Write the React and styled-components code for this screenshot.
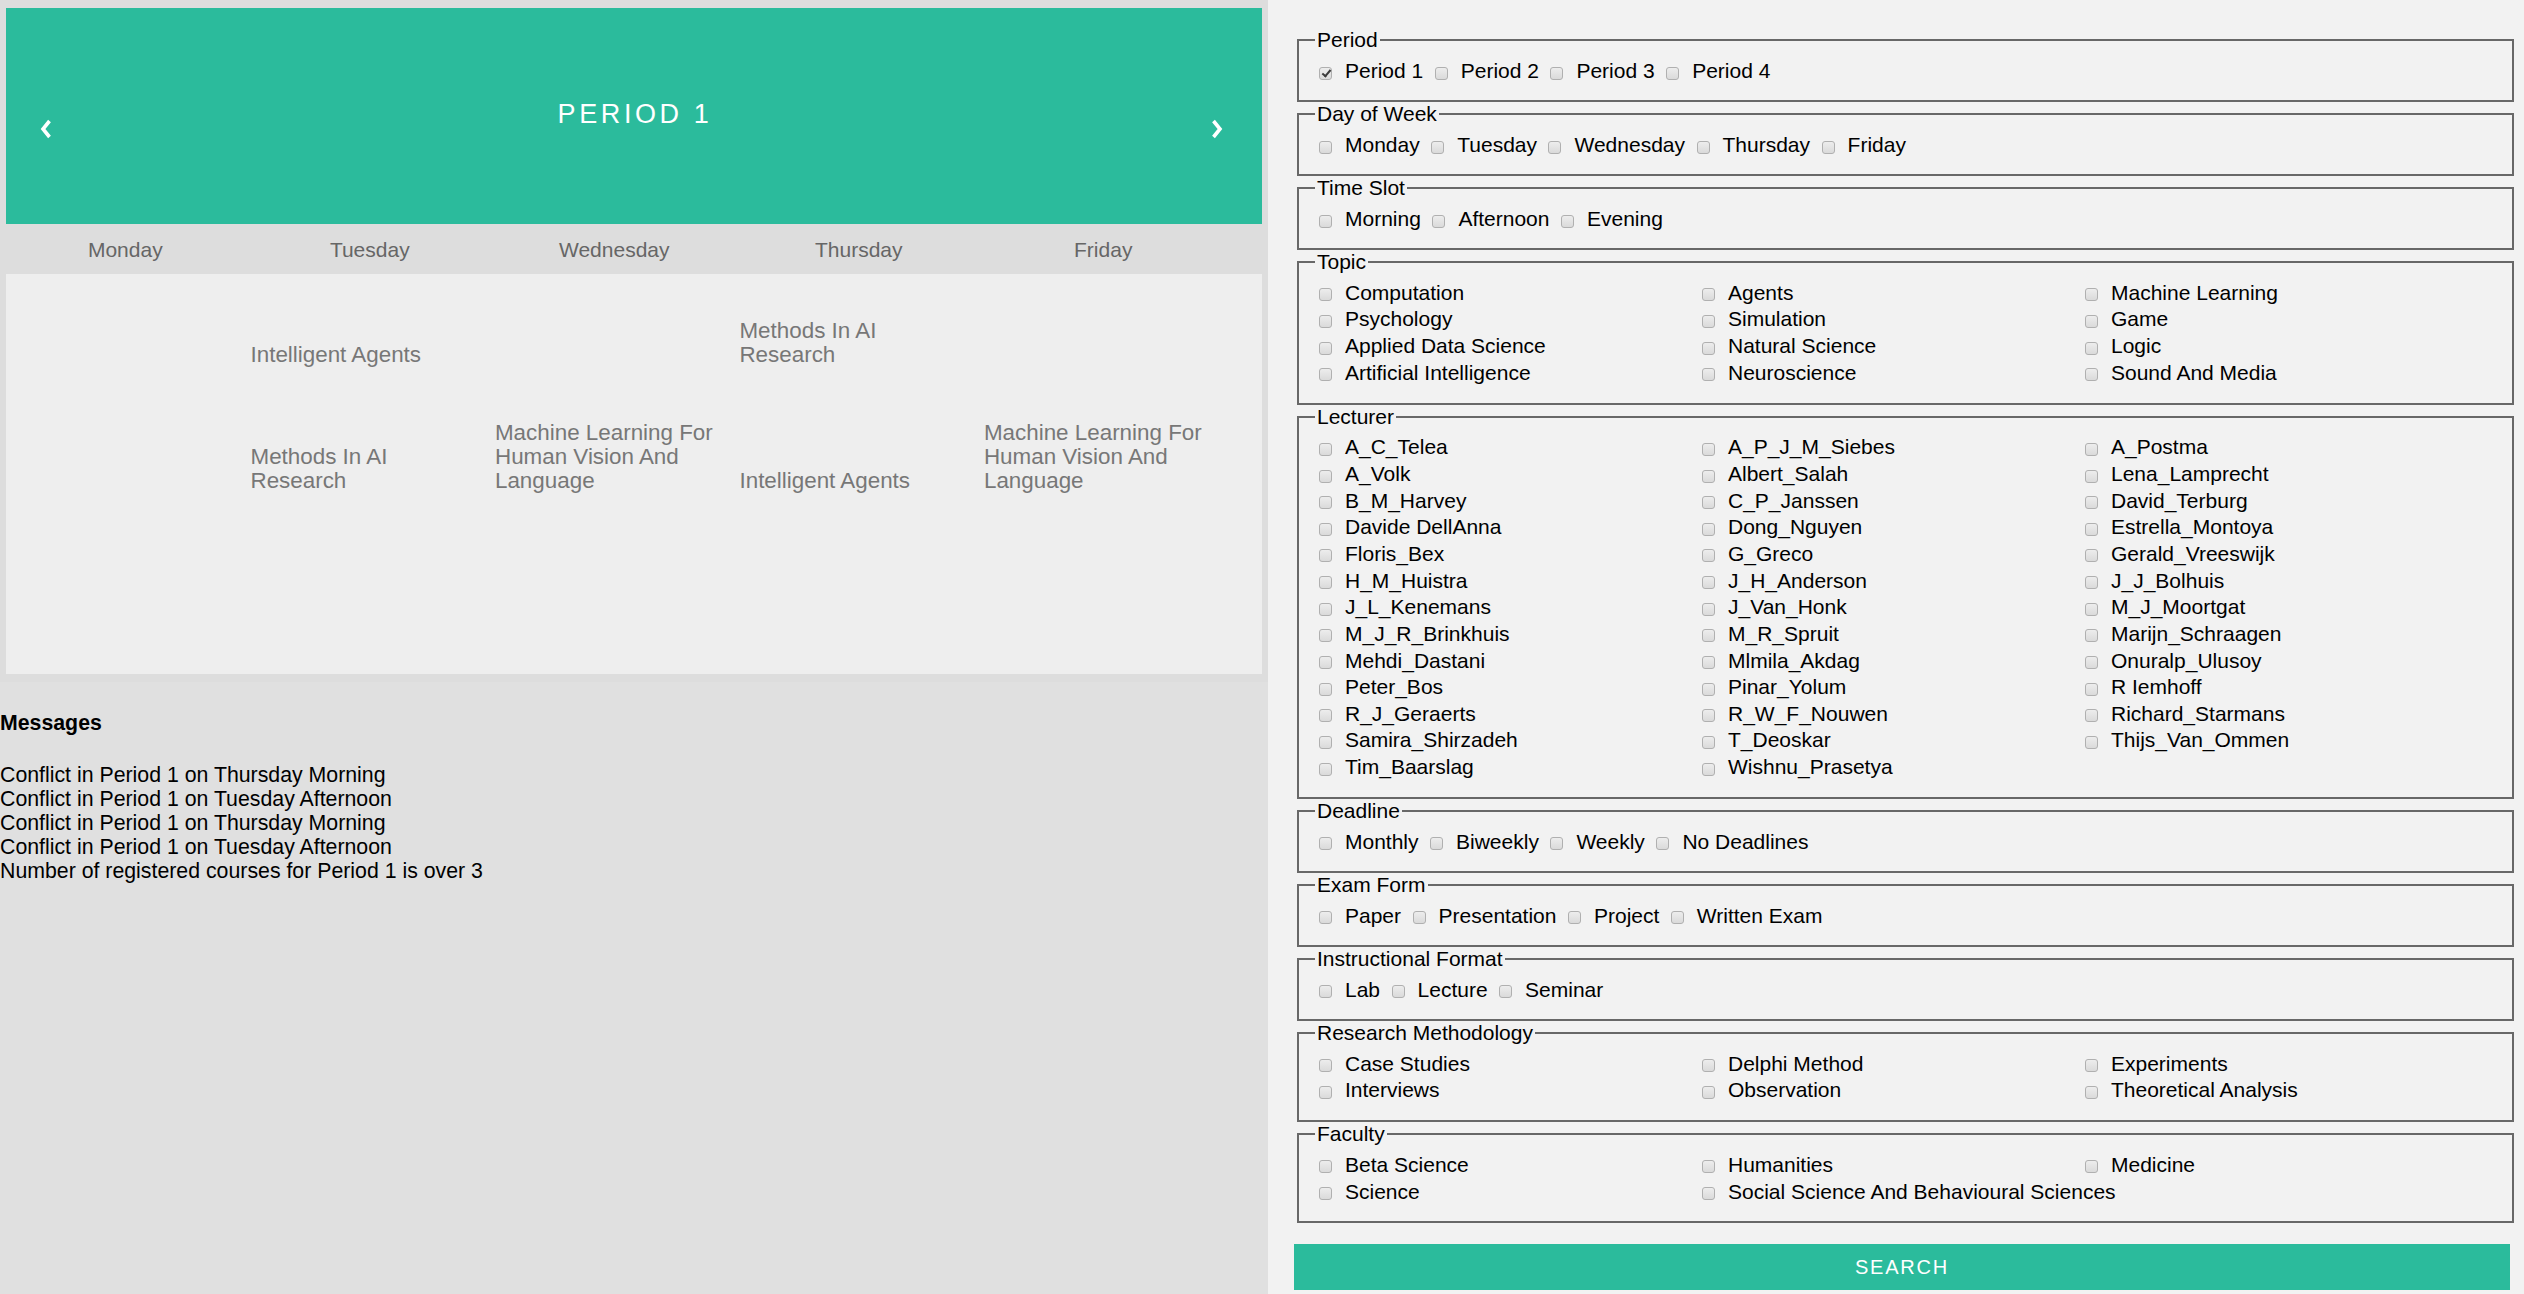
import React from 'react'
import styled, { createGlobalStyle } from 'styled-components'

const GlobalStyle = createGlobalStyle`
  html, body {
    margin: 0;
    padding: 0;
    background: #e0e0e0;
    font-family: "Liberation Sans", Arial, Helvetica, sans-serif;
  }
`

const Page = styled.div`
  display: grid;
  grid-template-columns: 1268px 1fr;
  height: 1294px;
  overflow: hidden;
`

const LeftCol = styled.div`
  background: #e0e0e0;
`

const CalendarWrap = styled.div`
  background: #ddd;
  padding: 8px 6px;
`

const MonthBar = styled.div`
  height: 216px;
  background: #2bbb9c;
  display: grid;
  grid-template-columns: 66px 1fr 66px;
  align-items: center;
  color: #fff;
`

const Arrow = styled.div`
  display: flex;
  justify-content: ${p => (p.$right ? 'flex-start' : 'flex-end')};
  padding-top: 25px;
  padding-left: ${p => (p.$right ? '15px' : '0')};
  padding-right: ${p => (p.$right ? '0' : '20px')};
`

const MonthTitle = styled.div`
  text-align: center;
  font-size: 27px;
  letter-spacing: 3.6px;
  text-transform: uppercase;
  padding-bottom: 3px;
  padding-left: 2px;
`

const Weekdays = styled.div`
  display: grid;
  grid-template-columns: repeat(5, 238.6px);
  column-gap: 5.9px;
  height: 50px;
  align-items: center;
  background: #ddd;
  color: #666;
  font-size: 21px;
  text-align: center;
  padding-top: 1px;
  box-sizing: border-box;
`

const DaysBody = styled.div`
  height: 400px;
  box-sizing: border-box;
  background: #eee;
  padding-top: 45px;
  display: grid;
  grid-template-columns: repeat(5, 238.6px);
  grid-auto-rows: max-content;
  column-gap: 5.9px;
  row-gap: 54px;
  align-items: end;
`

const Course = styled.div`
  color: #777;
  font-size: 22.4px;
  line-height: 24px;
  padding-right: 10px;
`

const MessagesTitle = styled.div`
  margin: 29px 0 28px;
  font-size: 21.3px;
  line-height: 24px;
  font-weight: bold;
  color: #000;
`

const Message = styled.div`
  font-size: 21.3px;
  line-height: 24px;
  color: #000;
`

const RightCol = styled.form`
  background: #f2f2f2;
  padding: 28px 10px 0 29px;
  margin: 0;
`

const Fieldset = styled.fieldset`
  margin: 0;
  padding: 5px 16px 15px;
  border: 2px solid #686868;
  min-width: 0;
`

const Legend = styled.legend`
  padding: 0 2px;
  font-size: 21px;
  line-height: 24px;
  color: #000;
`

const InlineRow = styled.div`
  display: flex;
  align-items: center;
  height: 28px;
  gap: 7.5px;
`

const GridRows = styled.div`
  display: grid;
  grid-template-columns: repeat(3, 383px);
  grid-auto-rows: 26.65px;
  align-items: center;
  padding: 0.5px 0 1.5px;
`

const Option = styled.label`
  display: flex;
  align-items: center;
  gap: 13px;
  font-size: 21px;
  line-height: 24px;
  color: #000;
  white-space: nowrap;
`

const Box = styled.input.attrs({ type: 'checkbox' })`
  appearance: none;
  -webkit-appearance: none;
  box-sizing: border-box;
  position: relative;
  margin: 0 0 0 4px;
  width: 13px;
  height: 13px;
  border: 1px solid #b0b0b0;
  border-radius: 3px;
  background: linear-gradient(#ededed, #dadada);
  transform: translateY(2px);
  flex: none;
  &:checked::after {
    content: '';
    position: absolute;
    left: 3.5px;
    top: 0.5px;
    width: 3px;
    height: 7px;
    border: solid #3a3a3a;
    border-width: 0 2px 2px 0;
    transform: rotate(40deg);
  }
`

const SearchButton = styled.button`
  display: block;
  margin: 21px 0 0 -3px;
  width: 1216px;
  height: 46px;
  border: none;
  background: #2bbb9c;
  color: #fff;
  font-family: "Liberation Sans", Arial, sans-serif;
  font-size: 20px;
  letter-spacing: 1.8px;
  text-transform: uppercase;
`

function Chevron({ right }) {
  return (
    <svg width="12" height="20" viewBox="0 0 12 20">
      <polyline
        points={right ? '2.5,2 9,10 2.5,18' : '9.5,2 3,10 9.5,18'}
        fill="none"
        stroke="#fff"
        strokeWidth="3.6"
      />
    </svg>
  )
}

const days = ['Monday', 'Tuesday', 'Wednesday', 'Thursday', 'Friday']

const slots = [
  ['', 'Intelligent Agents', '', 'Methods In AI Research', ''],
  [
    '',
    'Methods In AI Research',
    'Machine Learning For Human Vision And Language',
    'Intelligent Agents',
    'Machine Learning For Human Vision And Language',
  ],
]

const messages = [
  'Conflict in Period 1 on Thursday Morning',
  'Conflict in Period 1 on Tuesday Afternoon',
  'Conflict in Period 1 on Thursday Morning',
  'Conflict in Period 1 on Tuesday Afternoon',
  'Number of registered courses for Period 1 is over 3',
]

const filters = [
  { title: 'Period', items: ['Period 1', 'Period 2', 'Period 3', 'Period 4'], checked: ['Period 1'] },
  { title: 'Day of Week', items: ['Monday', 'Tuesday', 'Wednesday', 'Thursday', 'Friday'] },
  { title: 'Time Slot', items: ['Morning', 'Afternoon', 'Evening'] },
  {
    title: 'Topic',
    grid: true,
    items: [
      'Computation', 'Agents', 'Machine Learning',
      'Psychology', 'Simulation', 'Game',
      'Applied Data Science', 'Natural Science', 'Logic',
      'Artificial Intelligence', 'Neuroscience', 'Sound And Media',
    ],
  },
  {
    title: 'Lecturer',
    grid: true,
    items: [
      'A_C_Telea', 'A_P_J_M_Siebes', 'A_Postma',
      'A_Volk', 'Albert_Salah', 'Lena_Lamprecht',
      'B_M_Harvey', 'C_P_Janssen', 'David_Terburg',
      'Davide DellAnna', 'Dong_Nguyen', 'Estrella_Montoya',
      'Floris_Bex', 'G_Greco', 'Gerald_Vreeswijk',
      'H_M_Huistra', 'J_H_Anderson', 'J_J_Bolhuis',
      'J_L_Kenemans', 'J_Van_Honk', 'M_J_Moortgat',
      'M_J_R_Brinkhuis', 'M_R_Spruit', 'Marijn_Schraagen',
      'Mehdi_Dastani', 'Mlmila_Akdag', 'Onuralp_Ulusoy',
      'Peter_Bos', 'Pinar_Yolum', 'R Iemhoff',
      'R_J_Geraerts', 'R_W_F_Nouwen', 'Richard_Starmans',
      'Samira_Shirzadeh', 'T_Deoskar', 'Thijs_Van_Ommen',
      'Tim_Baarslag', 'Wishnu_Prasetya',
    ],
  },
  { title: 'Deadline', items: ['Monthly', 'Biweekly', 'Weekly', 'No Deadlines'] },
  { title: 'Exam Form', items: ['Paper', 'Presentation', 'Project', 'Written Exam'] },
  { title: 'Instructional Format', items: ['Lab', 'Lecture', 'Seminar'] },
  {
    title: 'Research Methodology',
    grid: true,
    items: ['Case Studies', 'Delphi Method', 'Experiments', 'Interviews', 'Observation', 'Theoretical Analysis'],
  },
  {
    title: 'Faculty',
    grid: true,
    items: ['Beta Science', 'Humanities', 'Medicine', 'Science', 'Social Science And Behavioural Sciences'],
  },
]

function FilterGroup({ title, items, grid, checked = [] }) {
  const Rows = grid ? GridRows : InlineRow
  return (
    <Fieldset>
      <Legend>{title}</Legend>
      <Rows>
        {items.map(item => (
          <Option key={item}>
            <Box defaultChecked={checked.includes(item)} />
            {item}
          </Option>
        ))}
      </Rows>
    </Fieldset>
  )
}

export default function App() {
  return (
    <Page>
      <GlobalStyle />
      <LeftCol>
        <CalendarWrap>
          <MonthBar>
            <Arrow>
              <Chevron />
            </Arrow>
            <MonthTitle>Period 1</MonthTitle>
            <Arrow $right>
              <Chevron right />
            </Arrow>
          </MonthBar>
          <Weekdays>
            {days.map(d => (
              <div key={d}>{d}</div>
            ))}
          </Weekdays>
          <DaysBody>
            {slots.map((row, r) =>
              row.map((c, i) => <Course key={`${r}-${i}`}>{c}</Course>)
            )}
          </DaysBody>
        </CalendarWrap>
        <MessagesTitle>Messages</MessagesTitle>
        {messages.map((m, i) => (
          <Message key={i}>{m}</Message>
        ))}
      </LeftCol>
      <RightCol onSubmit={e => e.preventDefault()}>
        {filters.map(f => (
          <FilterGroup key={f.title} {...f} />
        ))}
        <SearchButton type="submit">Search</SearchButton>
      </RightCol>
    </Page>
  )
}
